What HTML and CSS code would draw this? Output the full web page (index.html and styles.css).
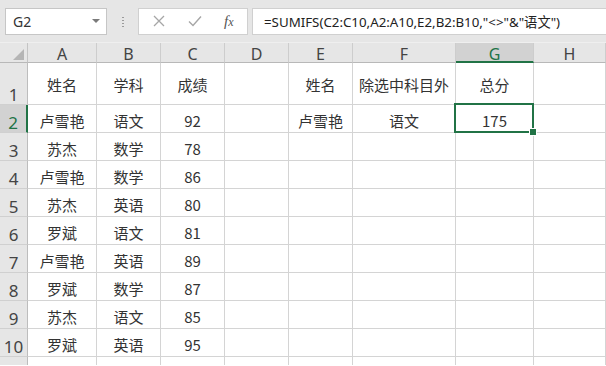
FILE: index.html
```html
<!DOCTYPE html>
<html lang="zh-CN">
<head>
<meta charset="utf-8">
<link rel="stylesheet" href="styles.css">
</head>
<body>
<div class="toolbar">
  <div class="namebox"><span>G2</span><span class="caret"></span></div>
  <div class="grip"></div>
  <div class="btns">
    <svg class="ic" width="14" height="14" viewBox="0 0 14 14"><path d="M2 2L12 12M12 2L2 12" stroke="#a6a6a6" stroke-width="1.3" fill="none"/></svg>
    <svg class="ic" width="16" height="14" viewBox="0 0 16 14"><path d="M2 7.5L6 11.5L14 2.5" stroke="#a6a6a6" stroke-width="1.4" fill="none"/></svg>
    <span class="fx">f<i>x</i></span>
  </div>
  <div class="formula">=SUMIFS(C2:C10,A2:A10,E2,B2:B10,"&lt;&gt;"&amp;"语文")</div>
</div>
<div class="sheet">
  <div class="corner"><span class="tri"></span></div>
  <div class="ch">A</div><div class="ch">B</div><div class="ch">C</div><div class="ch">D</div><div class="ch">E</div><div class="ch">F</div><div class="ch sel">G</div><div class="ch">H</div>

  <div class="rh r1">1</div>
  <div class="c r1">姓名</div><div class="c r1">学科</div><div class="c r1">成绩</div><div class="c r1"></div><div class="c r1">姓名</div><div class="c r1">除选中科目外</div><div class="c r1">总分</div><div class="c r1"></div>

  <div class="rh rsel">2</div>
  <div class="c">卢雪艳</div><div class="c">语文</div><div class="c">92</div><div class="c"></div><div class="c">卢雪艳</div><div class="c">语文</div><div class="c active">175</div><div class="c"></div>

  <div class="rh">3</div>
  <div class="c">苏杰</div><div class="c">数学</div><div class="c">78</div><div class="c"></div><div class="c"></div><div class="c"></div><div class="c"></div><div class="c"></div>

  <div class="rh">4</div>
  <div class="c">卢雪艳</div><div class="c">数学</div><div class="c">86</div><div class="c"></div><div class="c"></div><div class="c"></div><div class="c"></div><div class="c"></div>

  <div class="rh">5</div>
  <div class="c">苏杰</div><div class="c">英语</div><div class="c">80</div><div class="c"></div><div class="c"></div><div class="c"></div><div class="c"></div><div class="c"></div>

  <div class="rh">6</div>
  <div class="c">罗斌</div><div class="c">语文</div><div class="c">81</div><div class="c"></div><div class="c"></div><div class="c"></div><div class="c"></div><div class="c"></div>

  <div class="rh">7</div>
  <div class="c">卢雪艳</div><div class="c">英语</div><div class="c">89</div><div class="c"></div><div class="c"></div><div class="c"></div><div class="c"></div><div class="c"></div>

  <div class="rh">8</div>
  <div class="c">罗斌</div><div class="c">数学</div><div class="c">87</div><div class="c"></div><div class="c"></div><div class="c"></div><div class="c"></div><div class="c"></div>

  <div class="rh">9</div>
  <div class="c">苏杰</div><div class="c">语文</div><div class="c">85</div><div class="c"></div><div class="c"></div><div class="c"></div><div class="c"></div><div class="c"></div>

  <div class="rh">10</div>
  <div class="c">罗斌</div><div class="c">英语</div><div class="c">95</div><div class="c"></div><div class="c"></div><div class="c"></div><div class="c"></div><div class="c"></div>

  <div class="rh rlast"></div>
  <div class="c rlast"></div><div class="c rlast"></div><div class="c rlast"></div><div class="c rlast"></div><div class="c rlast"></div><div class="c rlast"></div><div class="c rlast"></div><div class="c rlast"></div>
</div>
</body>
</html>
```
FILE: styles.css
```css
* { box-sizing: border-box; }
html, body { margin: 0; padding: 0; }
body {
  width: 606px;
  height: 366px;
  overflow: hidden;
  background: #ffffff;
  font-family: "Noto Sans CJK SC", "Noto Sans", sans-serif;
  color: #333;
}
.toolbar {
  height: 43px;
  background: #e6e6e6;
  display: flex;
  align-items: center;
  padding-left: 5px;
  border-bottom: 1px solid #efefef;
}
.namebox {
  width: 102px;
  height: 27px;
  background: #fff;
  border: 1px solid #c6c6c6;
  display: flex;
  align-items: center;
  justify-content: space-between;
  padding: 0 6px 0 7px;
  font-family: "Noto Sans", sans-serif;
  font-size: 14px;
  color: #333;
}
.caret {
  width: 0; height: 0;
  border-left: 4px solid transparent;
  border-right: 4px solid transparent;
  border-top: 4px solid #7a7a7a;
}
.grip {
  width: 2px;
  height: 11px;
  margin: 0 14px 0 15px;
  background-image: radial-gradient(circle, #9a9a9a 0.8px, transparent 1px);
  background-size: 2px 3px;
}
.btns {
  width: 110px;
  height: 27px;
  background: #fff;
  border: 1px solid #d0d0d0;
  display: flex;
  align-items: center;
  padding-left: 13px;
  gap: 21px;
}
.fx {
  font-family: "Liberation Serif", serif;
  font-style: italic;
  font-size: 15px;
  color: #555;
}
.fx i { font-size: 12px; }
.formula {
  flex: 1;
  height: 27px;
  margin-left: 4px;
  background: #fff;
  border: 1px solid #d0d0d0;
  border-right: none;
  display: flex;
  align-items: center;
  padding-left: 11px;
  font-family: "Noto Sans", "Noto Sans CJK SC", sans-serif;
  font-size: 13.3px;
  color: #222;
  white-space: nowrap;
}
.sheet {
  display: grid;
  grid-template-columns: 28px 69px 64px 64px 64px 64px 103px 78px 72px;
  grid-template-rows: 20px 42px repeat(9, 28px) 8px;
}
.corner {
  background: #e6e6e6;
  border-right: 1px solid #c4c4c4;
  border-bottom: 1px solid #b8b8b8;
  display: flex;
  align-items: flex-end;
  justify-content: flex-end;
  padding: 0 3px 2px 0;
}
.tri {
  width: 0; height: 0;
  border-left: 11px solid transparent;
  border-bottom: 11px solid #b5b5b5;
}
.ch {
  background: #e6e6e6;
  border-right: 1px solid #cdcdcd;
  border-bottom: 1px solid #b8b8b8;
  display: flex;
  align-items: center;
  justify-content: center;
  padding-top: 2px;
  font-family: "Noto Sans", sans-serif;
  font-size: 16px;
  line-height: 1;
  color: #444;
}
.ch.sel {
  background: #d2d2d2;
  color: #217346;
  border-bottom: 2px solid #217346;
  padding-top: 3px;
}
.rh {
  background: #e6e6e6;
  border-right: 1px solid #bdbdbd;
  border-bottom: 1px solid #d0d0d0;
  display: flex;
  align-items: flex-end;
  justify-content: center;
  padding-bottom: 1px;
  font-family: "Noto Sans", sans-serif;
  font-size: 17px;
  line-height: 17px;
  color: #444;
}
.rh.rsel {
  background: #d2d2d2;
  color: #217346;
  border-right: 2px solid #217346;
}
.rh.rlast { border-bottom: none; }
.c {
  border-right: 1px solid #d4d4d4;
  border-bottom: 1px solid #d4d4d4;
  display: flex;
  align-items: center;
  justify-content: center;
  padding-top: 4px;
  font-size: 15px;
  color: #333;
  white-space: nowrap;
}
.c.r1 { padding-top: 2px; }
.c.rlast { border-bottom: none; }
.c.active { position: relative; }
.c.active::before {
  content: "";
  position: absolute;
  left: -2px; top: -2px; right: -1px; bottom: -1px;
  border: 2px solid #217346;
}
.c.active::after {
  content: "";
  position: absolute;
  right: -4px; bottom: -4px;
  width: 6px; height: 6px;
  background: #217346;
  border: 1px solid #fff;
}
```
